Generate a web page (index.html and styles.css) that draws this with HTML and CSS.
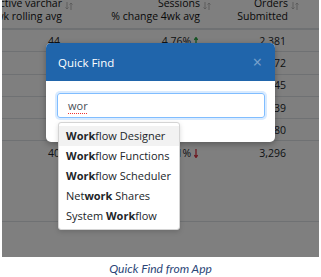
FILE: index.html
```html
<!DOCTYPE html>
<html lang="en">
<head>
    <meta charset="UTF-8">
    <title>Quick Find from App</title>
    <link rel="stylesheet" href="styles.css">
</head>
<body>
    <div class="shot">
        <div class="grid">
            <div class="row head">
                <div class="th"><span>Active varchar</span><span>4wk rolling avg</span><span class="sort"><svg width="8" height="8" viewBox="0 0 8 8"><path d="M2 0v7M0.5 5.5L2 7l1.5-1.5M6 8V1M4.5 2.5L6 1l1.5 1.5" fill="none" stroke="currentColor" stroke-width="1"/></svg></span></div>
                <div class="th"><span>Sessions</span><span>% change 4wk avg</span><span class="sort"><svg width="8" height="8" viewBox="0 0 8 8"><path d="M2 0v7M0.5 5.5L2 7l1.5-1.5M6 8V1M4.5 2.5L6 1l1.5 1.5" fill="none" stroke="currentColor" stroke-width="1"/></svg></span></div>
                <div class="th"><span>Orders</span><span>Submitted</span><span class="sort"><svg width="8" height="8" viewBox="0 0 8 8"><path d="M2 0v7M0.5 5.5L2 7l1.5-1.5M6 8V1M4.5 2.5L6 1l1.5 1.5" fill="none" stroke="currentColor" stroke-width="1"/></svg></span></div>
                <div></div>
            </div>
            <div class="row">
                <div class="td">44</div>
                <div class="td">4.76% <svg class="up" width="4" height="9" viewBox="0 0 4 9"><path d="M2 9V1M0.3 3L2 0.5 3.7 3" fill="none" stroke="currentColor" stroke-width="1.3"/></svg></div>
                <div class="td">2,381</div>
                <div></div>
            </div>
            <div class="row">
                <div class="td">39</div>
                <div class="td">2.10% <svg class="up" width="4" height="9" viewBox="0 0 4 9"><path d="M2 9V1M0.3 3L2 0.5 3.7 3" fill="none" stroke="currentColor" stroke-width="1.3"/></svg></div>
                <div class="td">3,172</div>
                <div></div>
            </div>
            <div class="row">
                <div class="td">51</div>
                <div class="td">1.35% <svg class="up" width="4" height="9" viewBox="0 0 4 9"><path d="M2 9V1M0.3 3L2 0.5 3.7 3" fill="none" stroke="currentColor" stroke-width="1.3"/></svg></div>
                <div class="td">2,945</div>
                <div></div>
            </div>
            <div class="row">
                <div class="td">47</div>
                <div class="td">0.82% <svg class="up" width="4" height="9" viewBox="0 0 4 9"><path d="M2 9V1M0.3 3L2 0.5 3.7 3" fill="none" stroke="currentColor" stroke-width="1.3"/></svg></div>
                <div class="td">3,039</div>
                <div></div>
            </div>
            <div class="row">
                <div class="td">42</div>
                <div class="td">-1.64% <svg class="down" width="4" height="9" viewBox="0 0 4 9"><path d="M2 0v8M0.3 6L2 8.5 3.7 6" fill="none" stroke="currentColor" stroke-width="1.3"/></svg></div>
                <div class="td">2,880</div>
                <div></div>
            </div>
            <div class="row last">
                <div class="td">40</div>
                <div class="td">-3.21% <svg class="down" width="4" height="9" viewBox="0 0 4 9"><path d="M2 0v8M0.3 6L2 8.5 3.7 6" fill="none" stroke="currentColor" stroke-width="1.3"/></svg></div>
                <div class="td">3,296</div>
                <div></div>
            </div>
            <div class="foot"></div>
        </div>

        <div class="backdrop"></div>

        <div class="modal">
            <div class="modal-header">
                <span class="modal-title">Quick Find</span>
                <span class="close">&times;</span>
            </div>
            <div class="modal-body">
                <div class="input"><span class="typed">wor</span></div>
            </div>
        </div>

        <ul class="dropdown">
            <li class="active"><b>Work</b>flow Designer</li>
            <li><b>Work</b>flow Functions</li>
            <li><b>Work</b>flow Scheduler</li>
            <li>Net<b>work</b> Shares</li>
            <li>System <b>Work</b>flow</li>
        </ul>
    </div>
    <p class="caption">Quick Find from App</p>
</body>
</html>
```

FILE: styles.css
```css
body {
    margin: 0;
    background: #fff;
    font-family: "Open Sans", "Noto Sans", sans-serif;
}
.shot {
    position: relative;
    width: 317px;
    height: 257px;
    margin-left: 2px;
    overflow: hidden;
    background: #fff;
    color: #212529;
}
.row {
    display: grid;
    grid-template-columns: 73px 138px 88px 18px;
    height: 22.3px;
    box-sizing: border-box;
    border-bottom: 1px solid #dee2e6;
    font-size: 10.5px;
    align-items: center;
}
.row.last {
    border-bottom: none;
}
.row.head {
    margin-top: -3px;
    height: 33px;
    border-bottom: 2px solid #dee2e6;
    align-items: start;
}
.th {
    position: relative;
    display: flex;
    flex-direction: column;
    align-items: flex-end;
    line-height: 13px;
    padding-right: 13px;
    font-size: 10.5px;
    color: #111;
    white-space: nowrap;
    min-width: 0;
}
.sort {
    position: absolute;
    right: 2px;
    top: 3px;
    color: #bbb;
}
.td {
    text-align: right;
    padding-right: 15px;
}
.up {
    color: #28a745;
    vertical-align: -1px;
}
.down {
    color: #dc3545;
    vertical-align: -1px;
}
.foot {
    height: 57px;
    border-bottom: 1px solid #dee2e6;
}
.backdrop {
    position: absolute;
    inset: 0;
    background: rgba(0, 0, 0, 0.5);
}
.modal {
    position: absolute;
    left: 44px;
    top: 43px;
    width: 229px;
    background: #fff;
    border-radius: 5px;
    overflow: hidden;
    box-shadow: 0 2px 6px rgba(0, 0, 0, 0.3);
}
.modal-header {
    height: 38px;
    background: #2065ab;
    display: flex;
    align-items: center;
    justify-content: space-between;
    padding: 0 12px;
}
.modal-title {
    color: #fff;
    font-size: 11.5px;
}
.close {
    color: #fff;
    opacity: 0.4;
    font-size: 16px;
    margin-right: 1px;
}
.modal-body {
    padding: 12px 10px 24px 11px;
}
.input {
    height: 25px;
    box-sizing: border-box;
    border: 1px solid #80bdff;
    border-radius: 3px;
    box-shadow: 0 0 0 2px rgba(0, 123, 255, 0.15);
    padding-left: 10px;
    font-size: 11px;
    line-height: 23px;
    color: #495057;
}
.typed {
    text-decoration: underline dotted #e33;
    text-underline-offset: 3px;
}
.dropdown {
    position: absolute;
    left: 56px;
    top: 122px;
    width: 122px;
    margin: 0;
    padding: 3px 0;
    list-style: none;
    background: #fff;
    border: 1px solid #d4d4d4;
    border-radius: 3px;
    box-shadow: 0 2px 5px rgba(0, 0, 0, 0.15);
    box-sizing: border-box;
}
.dropdown li {
    height: 20px;
    line-height: 20px;
    padding-left: 7px;
    font-size: 11px;
    color: #212529;
    white-space: nowrap;
}
.dropdown li.active {
    background: #f2f2f2;
}
.dropdown b {
    font-weight: 700;
}
.caption {
    margin: 4px 0 0;
    text-align: center;
    font-family: Lato, sans-serif;
    font-style: italic;
    font-size: 12px;
    color: #2b4677;
}
```
